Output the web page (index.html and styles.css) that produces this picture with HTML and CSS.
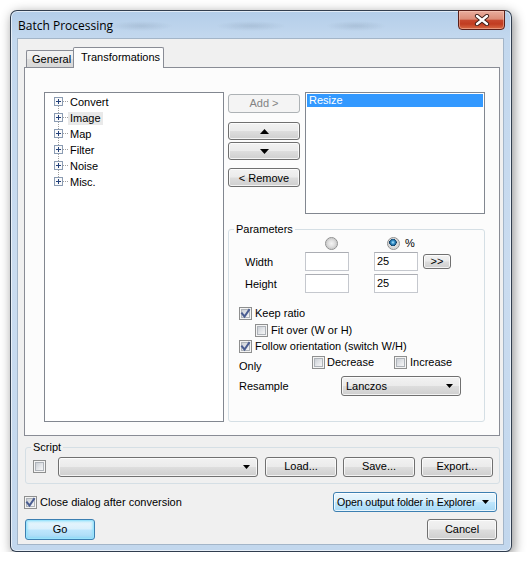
FILE: index.html
```html
<!DOCTYPE html>
<html>
<head>
<meta charset="utf-8">
<link rel="stylesheet" href="styles.css">
</head>
<body>
<div class="window">
  <div class="titlebar">
    <span class="title">Batch Processing</span>
    <div class="close">
      <svg width="16" height="12" viewBox="0 0 16 12">
        <path d="M3 2 L13 10 M13 2 L3 10" stroke="#3b1b16" stroke-width="4.2" stroke-linecap="round"/>
        <path d="M3 2 L13 10 M13 2 L3 10" stroke="#ffffff" stroke-width="2.4" stroke-linecap="round"/>
      </svg>
    </div>
  </div>
  <div class="client">
    <div class="tabs">
      <div class="tab">General</div>
      <div class="tab active">Transformations</div>
    </div>
    <div class="panel">
      <div class="tree">
        <div class="node first"><svg class="conn" width="14" height="16" viewBox="0 0 14 16"><path class="vl" d="M4.5 12 V16"/><rect x="0.5" y="3.5" width="8" height="8" class="pbox"/><path d="M2 7.5 H7 M4.5 5 V10" class="plus"/><path d="M9 7.5 H14" class="hl"/></svg><span class="lbl">Convert</span></div>
        <div class="node"><svg class="conn" width="14" height="16" viewBox="0 0 14 16"><path class="vl" d="M4.5 0 V3 M4.5 12 V16"/><rect x="0.5" y="3.5" width="8" height="8" class="pbox"/><path d="M2 7.5 H7 M4.5 5 V10" class="plus"/><path d="M9 7.5 H14" class="hl"/></svg><span class="lbl hot">Image</span></div>
        <div class="node"><svg class="conn" width="14" height="16" viewBox="0 0 14 16"><path class="vl" d="M4.5 0 V3 M4.5 12 V16"/><rect x="0.5" y="3.5" width="8" height="8" class="pbox"/><path d="M2 7.5 H7 M4.5 5 V10" class="plus"/><path d="M9 7.5 H14" class="hl"/></svg><span class="lbl">Map</span></div>
        <div class="node"><svg class="conn" width="14" height="16" viewBox="0 0 14 16"><path class="vl" d="M4.5 0 V3 M4.5 12 V16"/><rect x="0.5" y="3.5" width="8" height="8" class="pbox"/><path d="M2 7.5 H7 M4.5 5 V10" class="plus"/><path d="M9 7.5 H14" class="hl"/></svg><span class="lbl">Filter</span></div>
        <div class="node"><svg class="conn" width="14" height="16" viewBox="0 0 14 16"><path class="vl" d="M4.5 0 V3 M4.5 12 V16"/><rect x="0.5" y="3.5" width="8" height="8" class="pbox"/><path d="M2 7.5 H7 M4.5 5 V10" class="plus"/><path d="M9 7.5 H14" class="hl"/></svg><span class="lbl">Noise</span></div>
        <div class="node"><svg class="conn" width="14" height="16" viewBox="0 0 14 16"><path class="vl" d="M4.5 0 V3"/><rect x="0.5" y="3.5" width="8" height="8" class="pbox"/><path d="M2 7.5 H7 M4.5 5 V10" class="plus"/><path d="M9 7.5 H14" class="hl"/></svg><span class="lbl">Misc.</span></div>
      </div>
      <div class="rightcol">
        <div class="toprow">
          <div class="btncol">
            <div class="btn disabled add">Add &gt;</div>
            <div class="btn arrow up"><svg width="9" height="5" viewBox="0 0 9 5"><path d="M0 5 L4.5 0 L9 5 Z" fill="#000"/></svg></div>
            <div class="btn arrow down"><svg width="9" height="5" viewBox="0 0 9 5"><path d="M0 0 L9 0 L4.5 5 Z" fill="#000"/></svg></div>
            <div class="btn remove">&lt; Remove</div>
          </div>
          <div class="list">
            <div class="item sel">Resize</div>
          </div>
        </div>
        <fieldset class="group params">
          <legend>Parameters</legend>
          <div class="row radios">
            <span class="radio"></span>
            <span class="radio on"></span>
            <span class="pct">%</span>
          </div>
          <div class="row field first-field">
            <span class="flabel">Width</span>
            <span class="tbox"></span>
            <span class="tbox val">25</span>
            <div class="btn small">&gt;&gt;</div>
          </div>
          <div class="row field second-field">
            <span class="flabel">Height</span>
            <span class="tbox"></span>
            <span class="tbox val">25</span>
          </div>
          <div class="row chk keep"><span class="cb on"><svg width="11" height="11" viewBox="0 0 11 11"><path d="M2 5.5 L4.5 8.5 L9 2" class="tick"/></svg></span><span class="cbl">Keep ratio</span></div>
          <div class="row chk fit"><span class="cb"></span><span class="cbl">Fit over (W or H)</span></div>
          <div class="row chk follow"><span class="cb on"><svg width="11" height="11" viewBox="0 0 11 11"><path d="M2 5.5 L4.5 8.5 L9 2" class="tick"/></svg></span><span class="cbl">Follow orientation (switch W/H)</span></div>
          <div class="row chk only">
            <span class="onlylbl">Only</span>
            <span class="cb"></span><span class="cbl dec">Decrease</span>
            <span class="cb"></span><span class="cbl">Increase</span>
          </div>
          <div class="row resample">
            <span class="rlabel">Resample</span>
            <div class="combo lanczos"><span>Lanczos</span><svg width="7" height="4" viewBox="0 0 7 4"><path d="M0 0 H7 L3.5 4 Z" fill="#000"/></svg></div>
          </div>
        </fieldset>
      </div>
    </div>
    <fieldset class="group script">
      <legend>Script</legend>
      <div class="scriptrow">
        <span class="cb"></span>
        <div class="combo scombo"><span></span><svg width="7" height="4" viewBox="0 0 7 4"><path d="M0 0 H7 L3.5 4 Z" fill="#000"/></svg></div>
        <div class="btn sbtn">Load...</div>
        <div class="btn sbtn">Save...</div>
        <div class="btn sbtn">Export...</div>
      </div>
    </fieldset>
    <div class="foot1">
      <span class="cb on"><svg width="11" height="11" viewBox="0 0 11 11"><path d="M2 5.5 L4.5 8.5 L9 2" class="tick"/></svg></span>
      <span class="cbl">Close dialog after conversion</span>
      <div class="combo hot outcombo"><span>Open output folder in Explorer</span><svg width="7" height="4" viewBox="0 0 7 4"><path d="M0 0 H7 L3.5 4 Z" fill="#000"/></svg></div>
    </div>
    <div class="foot2">
      <div class="btn go">Go</div>
      <div class="btn cancel">Cancel</div>
    </div>
  </div>
</div>
</body>
</html>
```
FILE: styles.css
```css
* { box-sizing: border-box; }
body {
  margin: 0;
  background: #ffffff;
  font-family: "Liberation Sans", Arial, sans-serif;
  font-size: 11px;
  color: #000;
}
.window {
  margin: 10px 0 0 10px;
  width: 502px;
  height: 542px;
  border: 1px solid rgba(25, 35, 50, 0.85);
  border-radius: 7px 7px 6px 6px;
  padding: 0 7px 6px 6px;
  display: flex;
  flex-direction: column;
  background:
    radial-gradient(ellipse 32px 5px at 130px 15px, rgba(70,90,110,.15), transparent),
    radial-gradient(ellipse 35px 5px at 240px 15px, rgba(70,90,110,.15), transparent),
    radial-gradient(ellipse 30px 5px at 345px 15px, rgba(70,90,110,.15), transparent),
    radial-gradient(ellipse 30px 4px at 140px 35px, rgba(70,90,110,.1), transparent),
    radial-gradient(ellipse 20px 4px at 228px 35px, rgba(70,90,110,.1), transparent),
    radial-gradient(ellipse 28px 4px at 345px 35px, rgba(70,90,110,.1), transparent),
    linear-gradient(180deg, #b3cde9 0%, #c3d8ee 5%, #cadcf0 50%, #c2d7ed 100%);
  box-shadow: 2px 3px 12px rgba(0,0,0,.45), inset 0 0 0 1px rgba(255,255,255,.6);
}
.titlebar {
  display: flex;
  align-items: flex-start;
  height: 27px;
  flex: none;
}
.title {
  font-family: "Open Sans", "Noto Sans", sans-serif;
  font-size: 12px;
  line-height: 16px;
  margin: 7px 0 0 1px;
  color: #000;
}
.close {
  margin: -1px -1px 0 auto;
  width: 47px;
  height: 20px;
  border: 1px solid #5a201a;
  border-radius: 0 0 4px 4px;
  background: linear-gradient(180deg, #e9ad9e 0%, #dc8c77 45%, #c7472d 52%, #c13c21 72%, #d86a45 100%);
  box-shadow: inset 0 0 0 1px rgba(255,210,195,.45);
  display: flex;
  align-items: center;
  justify-content: center;
}
.client {
  width: 487px;
  height: 507px;
  border: 1px solid #a3b5c8;
  background: #f0f0f0;
  padding-top: 8px;
  display: flex;
  flex-direction: column;
  flex: none;
}
.tabs {
  display: flex;
  align-items: flex-end;
  height: 20px;
  margin-left: 8px;
}
.tab {
  height: 17px;
  width: 47px;
  border: 1px solid #898c95;
  border-right: none;
  border-bottom: none;
  border-radius: 2px 0 0 0;
  background: linear-gradient(180deg, #f3f3f3 0%, #ebebeb 50%, #dedede 51%, #d8d8d8 100%);
  padding: 2px 0 0 5px;
  line-height: 13px;
}
.tab.active {
  height: 21px;
  width: 91px;
  margin-bottom: -1px;
  border-right: 1px solid #898c95;
  border-radius: 2px 2px 0 0;
  background: #fcfcfc;
  position: relative;
  z-index: 1;
  padding: 3px 0 0 7px;
}
.panel {
  margin-left: 6px;
  width: 476px;
  height: 369px;
  border: 1px solid #898c95;
  background: #fcfcfc;
  padding: 24px 0 0 19px;
  display: flex;
  gap: 4px;
  flex: none;
}
.tree {
  width: 180px;
  height: 330px;
  border: 1px solid #828790;
  background: #fff;
  padding: 1px 0 0 9px;
}
.node {
  display: flex;
  align-items: center;
  height: 16px;
}
.conn { display: block; }
.vl, .hl { stroke: #a0a0a0; stroke-width: 1; stroke-dasharray: 1 1; fill: none; }
.pbox { fill: #fafafa; stroke: #8b9cb3; }
.plus { stroke: #24417a; stroke-width: 1; }
.lbl {
  padding: 0 2px;
  line-height: 13px;
  height: 13px;
}
.lbl.hot { background: #e9e9e9; }
.rightcol {
  width: 257px;
  display: flex;
  flex-direction: column;
}
.toprow {
  display: flex;
  gap: 5px;
}
.btncol {
  width: 72px;
  padding-top: 2px;
  display: flex;
  flex-direction: column;
}
.btn {
  border: 1px solid #707070;
  border-radius: 3px;
  background: linear-gradient(180deg, #f2f2f2 0%, #ebebeb 48%, #dddddd 52%, #cfcfcf 100%);
  box-shadow: inset 0 0 0 1px rgba(255,255,255,.75);
  display: flex;
  align-items: center;
  justify-content: center;
  line-height: 13px;
  white-space: nowrap;
}
.btn.disabled {
  border-color: #adb2b5;
  background: #f4f4f4;
  color: #838383;
  box-shadow: none;
}
.add { height: 19px; }
.arrow { height: 18px; }
.up { margin-top: 9px; }
.down { margin-top: 2px; }
.remove { height: 19px; margin-top: 8px; padding-top: 2px; }
.list {
  width: 180px;
  height: 122px;
  border: 1px solid #828790;
  background: #fff;
  padding: 1px;
}
.item {
  height: 13px;
  line-height: 13px;
  padding-left: 2px;
}
.item.sel { background: #3399ff; color: #fff; }
.group {
  margin: 0;
  padding: 0;
  border: 1px solid #d5dfe5;
  border-radius: 3px;
  min-width: 0;
}
.group legend {
  margin-left: 5px;
  padding: 0 2px;
  line-height: 13px;
  height: 13px;
}
.params {
  margin-top: 9px;
  height: 199px;
}
.row {
  display: flex;
  align-items: center;
}
.radios {
  margin-top: 1px;
  height: 13px;
  padding-left: 96px;
}
.radio {
  width: 13px;
  height: 13px;
  border-radius: 50%;
  border: 1px solid #8e8f8f;
  background: radial-gradient(circle at 50% 50%, #f4f4f4 0, #e2e2e2 3px, #cfcfcf 5px, #f0f0f0 6px);
}
.radio.on {
  margin-left: 49px;
  background:
    radial-gradient(circle at 45% 40%, #b5e8ff 0, #3d98d0 1.6px, #1a5c8c 3px, #0f3a5e 3.6px, transparent 3.8px),
    radial-gradient(circle at 50% 50%, #e8e8e8 0, #d5d5d5 5px, #f2f2f2 6px);
}
.pct { margin-left: 5px; line-height: 13px; }
.field { height: 19px; }
.first-field { margin-top: 2px; }
.second-field { margin-top: 3px; }
.flabel { width: 76px; padding-left: 16px; }
.tbox {
  width: 44px;
  height: 19px;
  border: 1px solid #c5c8ce;
  border-top-color: #abadb3;
  background: #fff;
  line-height: 17px;
  padding-left: 2px;
}
.tbox.val { margin-left: 25px; }
.btn.small {
  width: 28px;
  height: 15px;
  margin-left: 5px;
  line-height: 11px;
}
.chk { height: 13px; }
.keep { margin-top: 14px; padding-left: 10px; }
.fit { margin-top: 4px; padding-left: 26px; }
.follow { margin-top: 3px; padding-left: 10px; }
.only { margin-top: 3px; padding-left: 10px; }
.cb {
  width: 13px;
  height: 13px;
  flex: none;
  border: 1px solid #8e8f8f;
  background: #f6f6f6;
  box-shadow: inset 0 0 0 1px #f4f4f4, inset 0 0 0 2px #aeb3b9;
  position: relative;
}
.cb::before {
  content: "";
  position: absolute;
  left: 2px; top: 2px; right: 2px; bottom: 2px;
  background: linear-gradient(135deg, #cbcfd5 0%, #e6e8eb 60%, #f6f6f6 100%);
}
.cb svg { position: absolute; left: 0; top: 0; z-index: 1; }
.tick { fill: none; stroke: #4a5d91; stroke-width: 2; stroke-linecap: square; }
.cbl { margin-left: 3px; line-height: 13px; white-space: nowrap; }
.onlylbl { width: 73px; position: relative; top: 3px; }
.dec { margin-left: 2px; width: 67px; }
.resample { margin-top: 7px; height: 20px; }
.rlabel { width: 112px; padding-left: 10px; }
.combo {
  border: 1px solid #707070;
  border-radius: 3px;
  background: linear-gradient(180deg, #f2f2f2 0%, #ebebeb 48%, #dddddd 52%, #cfcfcf 100%);
  box-shadow: inset 0 0 0 1px rgba(255,255,255,.75);
  display: flex;
  align-items: center;
  justify-content: space-between;
  padding: 0 7px 0 4px;
  height: 20px;
  white-space: nowrap;
}
.lanczos { width: 120px; }
.combo.hot {
  border-color: #3c7fb1;
  background: linear-gradient(180deg, #eaf6fd 0%, #d9f0fc 48%, #bee6fd 52%, #a7d9f5 100%);
}
.script {
  margin: 5px 0 0 7px;
  width: 475px;
  height: 43px;
}
.scriptrow {
  display: flex;
  align-items: center;
  height: 21px;
  margin-top: 2px;
  padding-left: 7px;
}
.scombo { width: 200px; margin-left: 12px; }
.sbtn { width: 72px; height: 20px; margin-left: 6px; }
.scombo + .sbtn { margin-left: 7px; }
.foot1 {
  display: flex;
  align-items: center;
  height: 20px;
  margin: 8px 6px 0 6px;
}
.outcombo { margin-left: auto; width: 164px; padding-left: 3px; font-size: 10.6px; letter-spacing: -0.1px; }
.foot2 {
  display: flex;
  justify-content: space-between;
  margin: 7px 6px 0 7px;
}
.go, .cancel { width: 70px; height: 21px; }
.go {
  border-color: #3c7fb1;
  background: linear-gradient(180deg, #eaf6fd 0%, #d9f0fc 48%, #bee6fd 52%, #a7d9f5 100%);
  box-shadow: inset 0 0 0 1px #9ce3fb, inset 0 0 2px 2px rgba(120,220,250,.5);
}
```
